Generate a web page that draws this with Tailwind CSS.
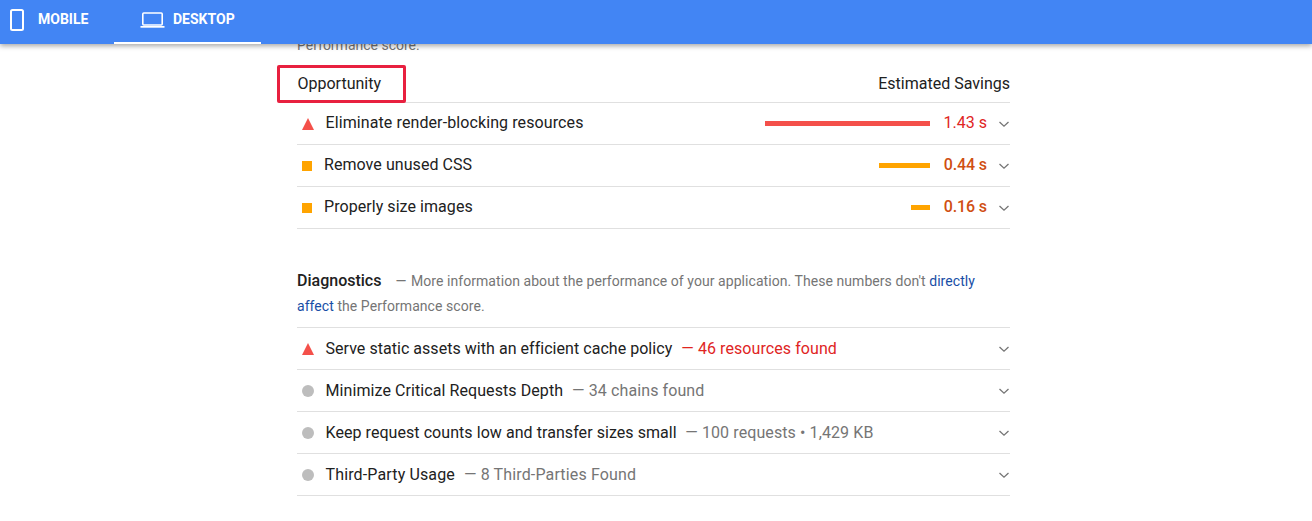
<!DOCTYPE html>
<html><head><meta charset="utf-8">
<script src="https://cdn.jsdelivr.net/npm/@tailwindcss/browser@4"></script>
</head>
<body class="bg-white font-['Roboto',sans-serif] text-[#212121] overflow-hidden">
<div class="w-[1312px] h-[521px] overflow-hidden">
  <header class="relative z-10 h-[44px] bg-[#4285f4] flex shadow-[0_2px_5px_rgba(0,0,0,0.35)] text-white text-[14px] font-bold">
    <div class="w-[114px] flex items-center h-[44px] pb-[5px]">
      <svg class="ml-[10px] w-[14px] h-[22px]" viewBox="0 0 14 22"><rect x="1" y="1" width="12" height="20" rx="1.5" fill="none" stroke="#fff" stroke-width="2"/></svg>
      <span class="ml-[14px]">MOBILE</span>
    </div>
    <div class="w-[147px] flex items-center h-[44px] pb-[3px] border-b-2 border-white">
      <svg class="ml-[26px] w-[25px] h-[16px]" viewBox="0 0 25 16"><rect x="2.8" y="1" width="19.4" height="12" rx="1" fill="none" stroke="#fff" stroke-width="1.6"/><rect x="0.5" y="14" width="24" height="1.7" fill="#fff"/></svg>
      <span class="ml-[8px]">DESKTOP</span>
    </div>
  </header>
  <main class="ml-[297px] w-[713px]">
    <p class="-mt-[11px] h-[33px] text-[14px] leading-[24px] text-[#757575]">Performance score.</p>
    <div class="relative flex justify-between items-center h-[37px] text-[16px] border-b border-[#e0e0e0]">
      <span class="ml-[0.5px]">Opportunity</span><span>Estimated Savings</span>
      <div class="absolute -left-[20px] top-[-1px] w-[129px] h-[38px] border-[3px] border-[#e8203f] rounded-[2px]"></div>
    </div>
    <div class="flex items-center h-[42px] border-b border-[#e0e0e0]">
      <svg class="ml-[5px] w-[12px] h-[12px]" viewBox="0 0 12 12"><path d="M6 0 12 12H0Z" fill="#f4504a"/></svg>
      <span class="ml-[11.5px] pb-[2px] text-[16px] tracking-[0.1px]">Eliminate render-blocking resources</span>
      <span class="ml-auto w-[165px] h-[5px] bg-[#f4504a]"></span>
      <span class="w-[57px] pb-[2px] text-right text-[16px] text-[#e0251f]">1.43 s</span>
      <svg class="ml-[11px] w-[12px] h-[12px]" viewBox="0 0 12 12"><path d="M1.5 4 6 8.2 10.5 4" fill="none" stroke="#757575" stroke-width="1.3"/></svg>
    </div>
    <div class="flex items-center h-[42px] border-b border-[#e0e0e0]">
      <span class="ml-[5px] w-[10px] h-[10px] bg-[#ffa400]"></span>
      <span class="ml-[12px] pb-[2px] text-[16px] tracking-[0.06px]">Remove unused CSS</span>
      <span class="ml-auto w-[51px] h-[5px] bg-[#ffa400]"></span>
      <span class="w-[57px] pb-[2px] text-right text-[16px] font-medium tracking-[-0.1px] text-[#d04f12]">0.44 s</span>
      <svg class="ml-[11px] w-[12px] h-[12px]" viewBox="0 0 12 12"><path d="M1.5 4 6 8.2 10.5 4" fill="none" stroke="#757575" stroke-width="1.3"/></svg>
    </div>
    <div class="flex items-center h-[42px] border-b border-[#e0e0e0]">
      <span class="ml-[5px] w-[10px] h-[10px] bg-[#ffa400]"></span>
      <span class="ml-[12px] pb-[2px] text-[16px] tracking-[0.06px]">Properly size images</span>
      <span class="ml-auto w-[19px] h-[5px] bg-[#ffa400]"></span>
      <span class="w-[57px] pb-[2px] text-right text-[16px] font-medium tracking-[-0.1px] text-[#d04f12]">0.16 s</span>
      <svg class="ml-[11px] w-[12px] h-[12px]" viewBox="0 0 12 12"><path d="M1.5 4 6 8.2 10.5 4" fill="none" stroke="#757575" stroke-width="1.3"/></svg>
    </div>
    <div class="mt-[39px] h-[59px] text-[14px] leading-[25px] tracking-[0.06px] text-[#757575]">
      <span class="text-[16px] tracking-normal font-medium text-[#212121]">Diagnostics</span><span class="ml-[14px] mr-[1px]">—</span> More information about the performance of your application. These numbers don't <span class="text-[#174ea6]">directly affect</span> the Performance score.
    </div>
    <div class="border-t border-[#e0e0e0] text-[16px] tracking-[0.08px]">
      <div class="flex items-center h-[42px] border-b border-[#e0e0e0]">
        <svg class="ml-[5px] w-[12px] h-[12px]" viewBox="0 0 12 12"><path d="M6 0 12 12H0Z" fill="#f4504a"/></svg>
        <span class="ml-[11.5px] tracking-[0.04px]">Serve static assets with an efficient cache policy</span>
        <span class="ml-[9px] text-[#e0251f]">— 46 resources found</span>
        <svg class="ml-auto w-[12px] h-[12px]" viewBox="0 0 12 12"><path d="M1.5 4 6 8.2 10.5 4" fill="none" stroke="#757575" stroke-width="1.3"/></svg>
      </div>
      <div class="flex items-center h-[42px] border-b border-[#e0e0e0]">
        <span class="ml-[5px] w-[12px] h-[12px] rounded-full bg-[#bdbdbd]"></span>
        <span class="ml-[11.5px]">Minimize Critical Requests Depth</span>
        <span class="ml-[9px] tracking-[0.1px] text-[#757575]">— 34 chains found</span>
        <svg class="ml-auto w-[12px] h-[12px]" viewBox="0 0 12 12"><path d="M1.5 4 6 8.2 10.5 4" fill="none" stroke="#757575" stroke-width="1.3"/></svg>
      </div>
      <div class="flex items-center h-[42px] border-b border-[#e0e0e0]">
        <span class="ml-[5px] w-[12px] h-[12px] rounded-full bg-[#bdbdbd]"></span>
        <span class="ml-[11.5px] tracking-[0.06px]">Keep request counts low and transfer sizes small</span>
        <span class="ml-[8.5px] tracking-[0.1px] text-[#757575]">— 100 requests • 1,429 KB</span>
        <svg class="ml-auto w-[12px] h-[12px]" viewBox="0 0 12 12"><path d="M1.5 4 6 8.2 10.5 4" fill="none" stroke="#757575" stroke-width="1.3"/></svg>
      </div>
      <div class="flex items-center h-[42px] border-b border-[#e0e0e0]">
        <span class="ml-[5px] w-[12px] h-[12px] rounded-full bg-[#bdbdbd]"></span>
        <span class="ml-[11.5px] tracking-[0.14px]">Third-Party Usage</span>
        <span class="ml-[9px] tracking-[0.14px] text-[#757575]">— 8 Third-Parties Found</span>
        <svg class="ml-auto w-[12px] h-[12px]" viewBox="0 0 12 12"><path d="M1.5 4 6 8.2 10.5 4" fill="none" stroke="#757575" stroke-width="1.3"/></svg>
      </div>
    </div>
  </main>
</div>
</body></html>
